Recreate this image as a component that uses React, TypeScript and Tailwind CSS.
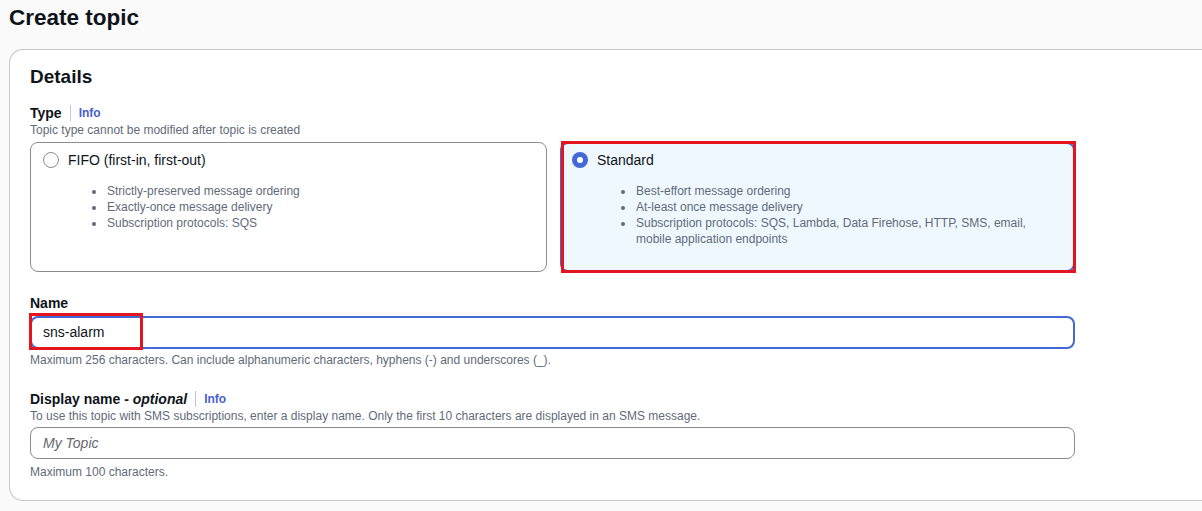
import React from 'react'

// ─── Small pieces ─────────────────────────────────────────────────────────────

function InfoLink() {
  return (
    <>
      <span className="mx-[8px] h-[16px] w-px bg-[#c6c6cd]" />
      <span className="text-[12px] font-bold text-[#4a5fd0]">Info</span>
    </>
  )
}

function Radio({ checked }: { checked: boolean }) {
  return checked ? (
    <span className="flex h-[16px] w-[16px] shrink-0 items-center justify-center rounded-full bg-[#4468d4]">
      <span className="h-[6px] w-[6px] rounded-full bg-white" />
    </span>
  ) : (
    <span className="h-[16px] w-[16px] shrink-0 rounded-full border border-[#8c8c94] bg-white" />
  )
}

interface TypeOption {
  id: string
  label: string
  bullets: string[]
}

const OPTIONS: TypeOption[] = [
  {
    id: 'fifo',
    label: 'FIFO (first-in, first-out)',
    bullets: [
      'Strictly-preserved message ordering',
      'Exactly-once message delivery',
      'Subscription protocols: SQS',
    ],
  },
  {
    id: 'standard',
    label: 'Standard',
    bullets: [
      'Best-effort message ordering',
      'At-least once message delivery',
      'Subscription protocols: SQS, Lambda, Data Firehose, HTTP, SMS, email, mobile application endpoints',
    ],
  },
]

function TypeCard({ option, selected }: { option: TypeOption; selected: boolean }) {
  return (
    <div
      className={
        selected
          ? 'relative flex-1 rounded-[8px] border-2 border-[#4468d4] bg-[#f0f8ff] px-[10px] pt-[6px]'
          : 'relative flex-1 rounded-[8px] border border-[#8c8c94] bg-white px-[12px] pt-[7px]'
      }
    >
      <div className="flex items-center gap-[9px]">
        <Radio checked={selected} />
        <span className="text-[14px] leading-[20px] text-[#0f141a]">{option.label}</span>
      </div>
      <ul className="mt-[13px] list-disc pl-[63px] pr-[20px] text-[12px] leading-[16px] text-[#5f6b7a] marker:text-[#5f6b7a]">
        {option.bullets.map((b) => (
          <li key={b} className="pl-[1px]">
            {b}
          </li>
        ))}
      </ul>
      {selected && (
        <div className="pointer-events-none absolute -bottom-[3px] -left-[1px] -right-[3px] -top-[3px] border-[3px] border-[#e3161f]" />
      )}
    </div>
  )
}

// ─── App ──────────────────────────────────────────────────────────────────────

export default function App() {
  return (
    <div
      className="h-[511px] w-[1202px] overflow-hidden bg-[#fafafa] text-[#0f141a]"
      style={{ fontFamily: '"Liberation Sans", Arial, sans-serif' }}
    >
      <h1 className="px-[9px] pt-[3px] text-[22.5px] font-bold leading-[30px]">Create topic</h1>

      <div className="mt-[16px] flex pl-[9px]">
        <div className="h-[452px] flex-1 rounded-l-[14px] border-y border-l border-[#c6c6cd] bg-white pl-[20px] pt-[15px]">
          <div className="w-[1045px]">
            <h2 className="text-[19px] font-bold leading-[24px]">Details</h2>

            {/* Type */}
            <div className="mt-[14px] flex items-center">
              <span className="text-[14px] font-bold leading-[20px]">Type</span>
              <InfoLink />
            </div>
            <p className="-mt-[1px] text-[12px] leading-[16px] text-[#5f6b7a]">
              Topic type cannot be modified after topic is created
            </p>
            <div className="mt-[4px] flex h-[130px] gap-[13px]">
              {OPTIONS.map((o) => (
                <TypeCard key={o.id} option={o} selected={o.id === 'standard'} />
              ))}
            </div>

            {/* Name */}
            <div className="mt-[21px] text-[14px] font-bold leading-[20px]">Name</div>
            <div className="relative mt-[3px] flex h-[33px] items-center rounded-[8px] border-2 border-[#4468d4] px-[11px] text-[14px]">
              sns-alarm
              <div className="pointer-events-none absolute -left-[3px] -top-[5px] h-[37px] w-[114px] border-[3px] border-[#e3161f]" />
            </div>
            <p className="mt-[3px] text-[12px] leading-[16px] text-[#5f6b7a]">
              Maximum 256 characters. Can include alphanumeric characters, hyphens (-) and underscores (_).
            </p>

            {/* Display name */}
            <div className="mt-[21px] flex items-center">
              <span className="text-[14px] font-bold leading-[20px]">
                Display name - <i>optional</i>
              </span>
              <InfoLink />
            </div>
            <p className="-mt-[1px] text-[12px] leading-[16px] text-[#5f6b7a]">
              To use this topic with SMS subscriptions, enter a display name. Only the first 10 characters are
              displayed in an SMS message.
            </p>
            <div className="mt-[3px] flex h-[32px] items-center rounded-[8px] border border-[#8c8c94] px-[12px] text-[14px] italic text-[#656871]">
              My Topic
            </div>
            <p className="mt-[5px] text-[12px] leading-[16px] text-[#5f6b7a]">Maximum 100 characters.</p>
          </div>
        </div>
      </div>
    </div>
  )
}
